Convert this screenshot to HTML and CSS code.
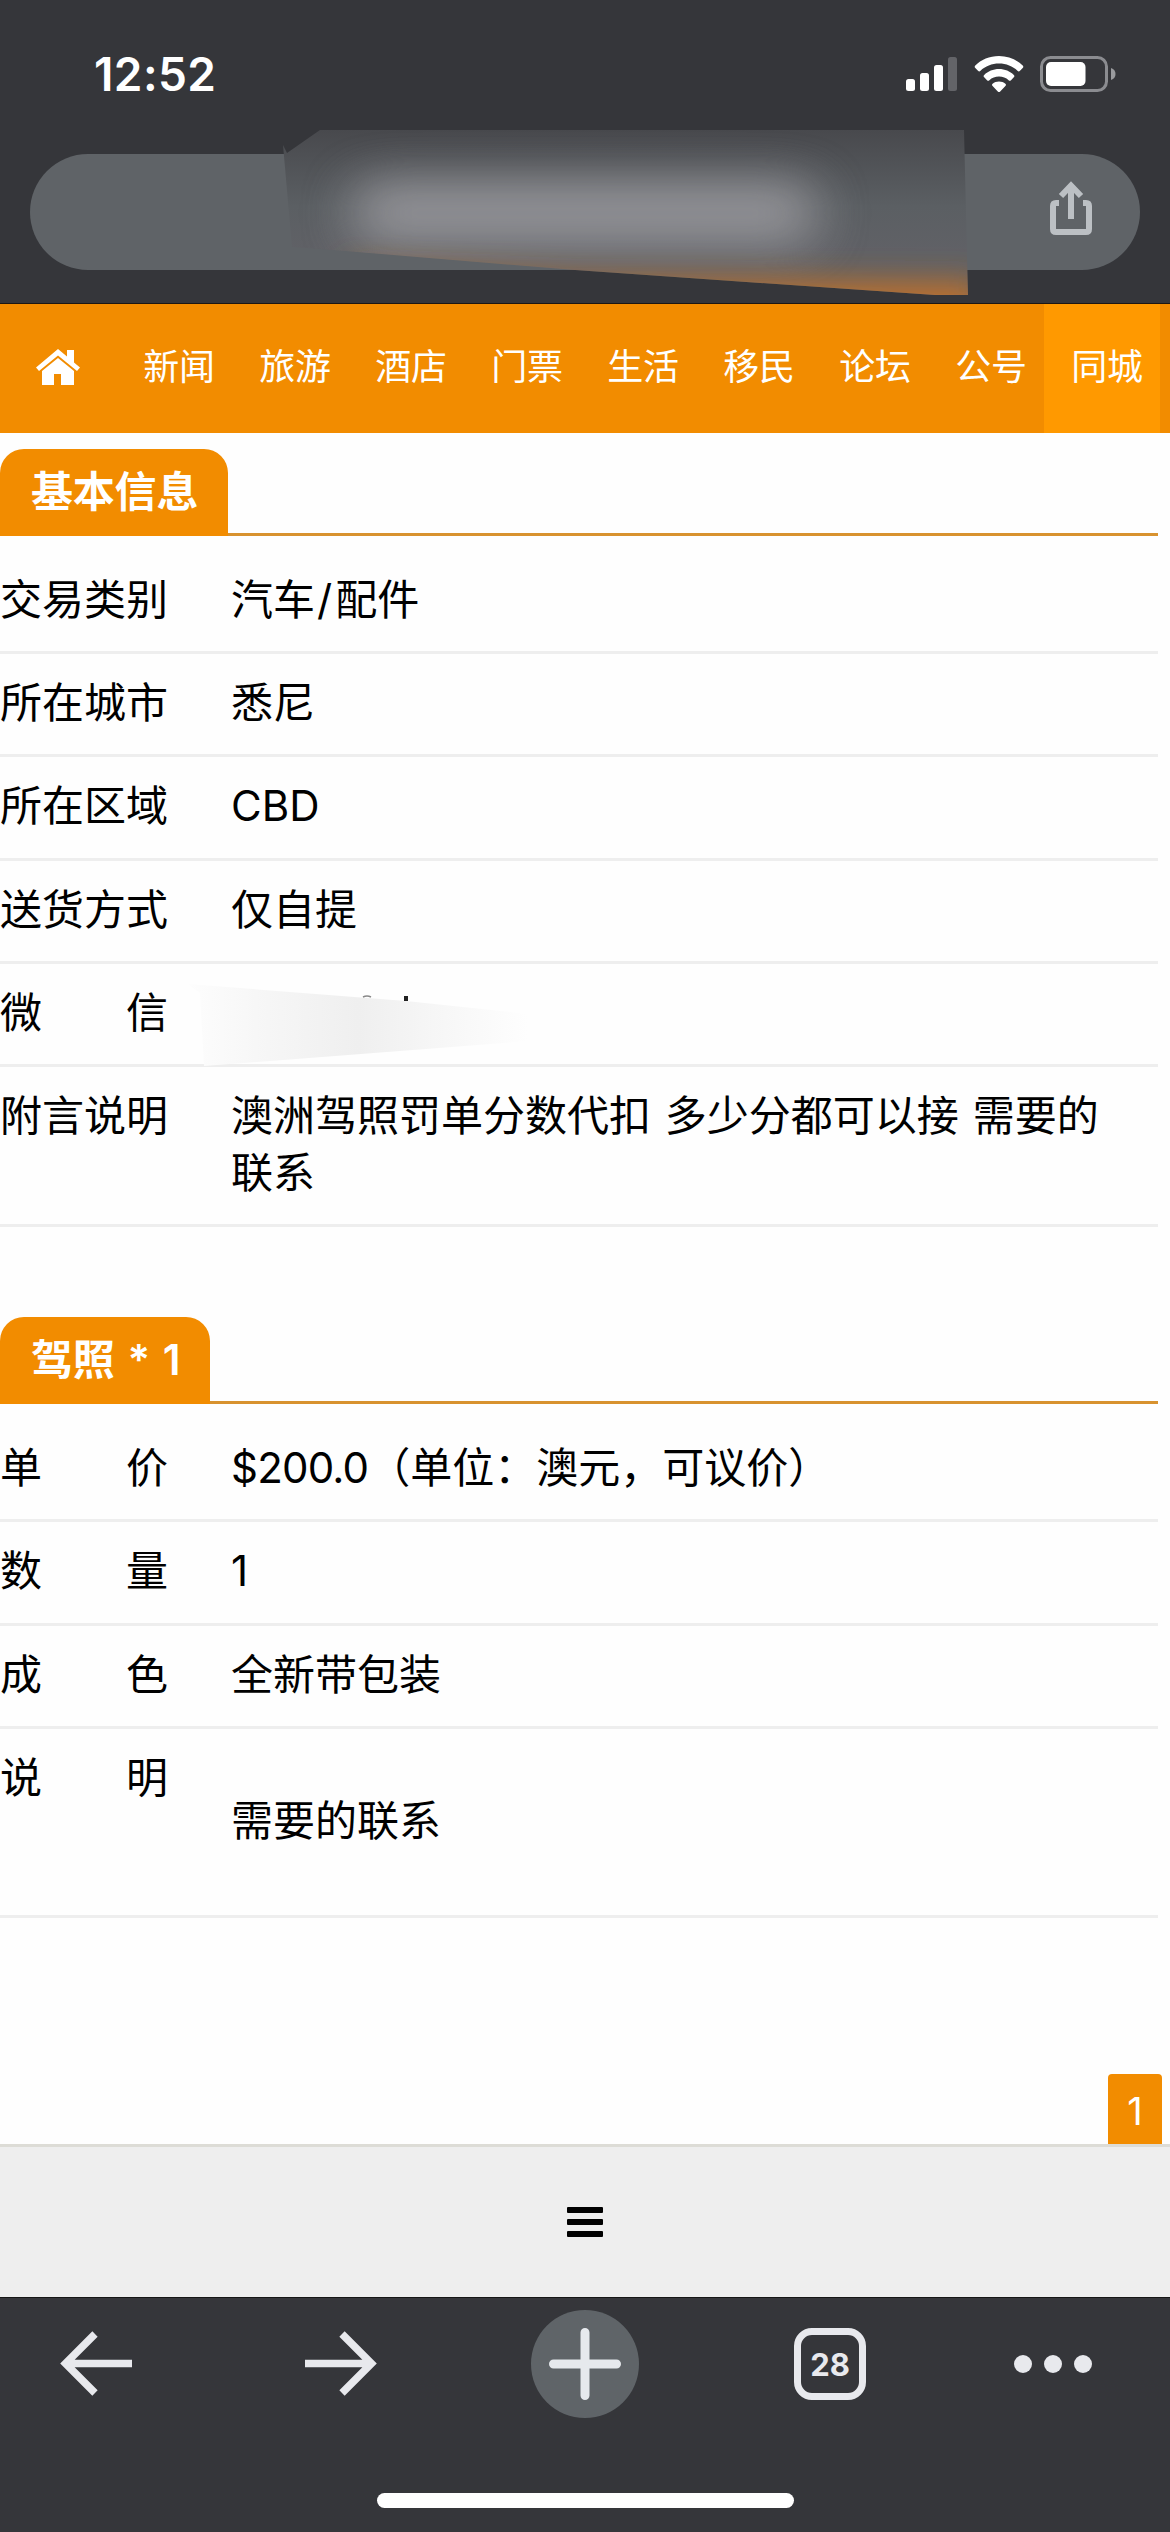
FILE: index.html
```html
<!DOCTYPE html>
<html lang="zh-CN">
<head>
    <meta charset="UTF-8">
    <meta name="viewport" content="width=device-width, initial-scale=1.0">
    <title>同城 - 基本信息</title>
    <link rel="stylesheet" href="styles.css">
</head>
<body>
    <header id="browser-top">
        <div class="status-bar">
            <span class="time">12:52</span>
            <div class="status-icons">
                <svg class="signal" viewBox="0 0 52 36" width="52" height="36">
                    <rect x="0" y="23" width="9" height="12" rx="2.5" fill="#fff"/>
                    <rect x="14" y="17" width="9" height="18" rx="2.5" fill="#fff"/>
                    <rect x="28" y="9" width="9" height="26" rx="2.5" fill="#fff"/>
                    <rect x="42" y="1" width="9" height="34" rx="2.5" fill="#636468"/>
                </svg>
                <svg class="wifi" viewBox="0 0 50 38" width="50" height="38">
                    <path d="M25 1C15.500 1 7 4.800 1.300 10.500c-.8.8-.8 1.700 0 2.500l2.700 2.800c.8.8 1.700.8 2.500 0C11.300 11.300 17.800 8.600 25 8.600s13.700 2.700 18.500 7.200c.8.8 1.700.8 2.500 0l2.700-2.800c.8-.8.8-1.700 0-2.500C43 4.800 34.500 1 25 1z" fill="#fff"/>
                    <path d="M25 14c-5.800 0-11 2.300-14.800 5.900-.8.8-.8 1.600 0 2.400l2.800 2.900c.8.800 1.600.8 2.400 0 2.500-2.300 5.900-3.600 9.600-3.600s7.100 1.300 9.600 3.600c.8.800 1.600.8 2.400 0l2.800-2.900c.8-.8.8-1.600 0-2.400C36 16.300 30.800 14 25 14z" fill="#fff"/>
                    <path d="M25 26.500c-2.500 0-4.700.9-6.400 2.300-.8.700-.7 1.500 0 2.300l5.200 5.300c.8.800 1.600.8 2.400 0l5.200-5.300c.7-.8.8-1.600 0-2.300-1.700-1.400-3.900-2.300-6.400-2.300z" fill="#fff"/>
                </svg>
                <svg class="battery" viewBox="0 0 76 36" width="76" height="36">
                    <rect x="1.500" y="1.500" width="65" height="33" rx="9" fill="none" stroke="#8b8c90" stroke-width="3"/>
                    <rect x="6" y="6" width="39.500" height="24" rx="5" fill="#fff"/>
                    <path d="M71 12c3 1 4.500 3.200 4.500 6S74 23 71 24z" fill="#9a9b9e"/>
                </svg>
            </div>
        </div>
        <div class="address-bar">
            <svg viewBox="0 0 42 54" width="42" height="54" fill="none" stroke="#bcc0c4" stroke-width="6">
                <path d="M9 22H6q-3 0-3 3v23q0 3 3 3h30q3 0 3-3V25q0-3-3-3h-3"/>
                <path d="M21 38V4M11 15L21 4.500 31 15"/>
            </svg>
        </div>
        <!-- endereço borrado -->
        <svg class="address-blur" viewBox="0 0 690 170" width="690" height="170">
            <defs>
                <clipPath id="smudge"><path d="M3 15L7 23 40 0H684L688 165H655L295 140 65 121 12 117z"/></clipPath>
                <linearGradient id="smudge-bg" x1="0" y1="0" x2="0" y2="1">
                    <stop offset="0" stop-color="#48494d"/>
                    <stop offset=".45" stop-color="#5b5f63"/>
                    <stop offset=".72" stop-color="#606166"/>
                    <stop offset="1" stop-color="#60605f"/>
                </linearGradient>
                <filter id="soft" x="-30%" y="-120%" width="160%" height="340%"><feGaussianBlur stdDeviation="26 22"/></filter>
                <filter id="glow" x="-30%" y="-80%" width="160%" height="260%"><feGaussianBlur stdDeviation="15"/></filter>
            </defs>
            <g clip-path="url(#smudge)">
                <rect width="690" height="170" fill="url(#smudge-bg)"/>
                <rect x="75" y="48" width="460" height="70" rx="20" fill="#929296" opacity=".95" filter="url(#soft)"/>
                <path d="M60 138L295 150 700 152V200H200z" fill="#bd712f" filter="url(#glow)"/>
            </g>
        </svg>
    </header>

    <nav id="nav">
        <a class="home">
            <svg viewBox="0 0 44 36" width="44" height="36" fill="#fff">
                <path d="M22 0L0 18.500l3 3.500L22 6.500 41 22l3-3.500-6-5V1h-7v6.500z"/>
                <path d="M22 9L6 22v14h12V25h7v11h13V22z"/>
            </svg>
        </a>
        <a>新闻</a>
        <a>旅游</a>
        <a>酒店</a>
        <a>门票</a>
        <a>生活</a>
        <a>移民</a>
        <a>论坛</a>
        <a>公号</a>
        <a class="active">同城</a>
    </nav>

    <main id="content">
        <section>
            <div class="section-title"><h2>基本信息</h2></div>
            <div class="row"><div class="label">交易类别</div><div class="value">汽车<span class="slash">/</span>配件</div></div>
            <div class="row"><div class="label">所在城市</div><div class="value">悉尼</div></div>
            <div class="row"><div class="label">所在区域</div><div class="value">CBD</div></div>
            <div class="row"><div class="label">送货方式</div><div class="value">仅自提</div></div>
            <div class="row wechat">
                <div class="label">微　　信</div>
                <div class="value"></div>
                <svg class="wechat-blur" viewBox="0 0 340 84" width="340" height="84">
                    <defs>
                        <linearGradient id="grey">
                            <stop offset="0" stop-color="#fdfdfd"/>
                            <stop offset=".2" stop-color="#f7f7f7"/>
                            <stop offset=".5" stop-color="#efefef"/>
                            <stop offset=".72" stop-color="#f6f6f6"/>
                            <stop offset="1" stop-color="#fefefe"/>
                        </linearGradient>
                    </defs>
                    <path d="M0 0L218 17 340 30V57L16 82 12 9z" fill="url(#grey)"/>
                    <path d="M175 13q4-2 8 0" stroke="#888" stroke-width="1.500" fill="none"/>
                    <path d="M216 12h4v5h-4z" fill="#222"/>
                </svg>
            </div>
            <div class="row"><div class="label">附言说明</div><div class="value">澳洲驾照罚单分数代扣 多少分都可以接 需要的联系</div></div>
        </section>

        <section>
            <div class="section-title"><h2>驾照 * 1</h2></div>
            <div class="row"><div class="label">单　　价</div><div class="value"><span class="price">$200.0</span>（单位：澳元，可议价）</div></div>
            <div class="row"><div class="label">数　　量</div><div class="value">1</div></div>
            <div class="row"><div class="label">成　　色</div><div class="value">全新带包装</div></div>
            <div class="row"><div class="label">说　　明</div><div class="value"><p>需要的联系</p></div></div>
        </section>

        <div class="page-number">1</div>
    </main>

    <div id="menu-bar">
        <svg viewBox="0 0 36 30" width="36" height="30">
            <rect y="0" width="36" height="6" rx="1"/>
            <rect y="12" width="36" height="6" rx="1"/>
            <rect y="24" width="36" height="6" rx="1"/>
        </svg>
    </div>

    <footer id="browser-bottom">
        <div class="toolbar">
            <svg viewBox="0 0 72 66" width="72" height="66" fill="none" stroke="#e8e9ed" stroke-width="7.500">
                <path d="M72 32.500H7M35 3L5.500 32.500 35 62"/>
            </svg>
            <svg viewBox="0 0 72 66" width="72" height="66" fill="none" stroke="#e8e9ed" stroke-width="7.500">
                <path d="M0 32.500H65M37 3L66.500 32.500 37 62"/>
            </svg>
            <div class="new-tab">
                <svg viewBox="0 0 72 72" width="72" height="72" stroke="#e6e9ed" stroke-width="9" stroke-linecap="round">
                    <path d="M4.500 36H67.500M36 4.500V67.500"/>
                </svg>
            </div>
            <div class="tabs">28</div>
            <svg viewBox="0 0 78 18" width="78" height="18" fill="#e8e9ed">
                <circle cx="9" cy="9" r="9"/>
                <circle cx="39" cy="9" r="9"/>
                <circle cx="69" cy="9" r="9"/>
            </svg>
        </div>
        <div class="home-indicator"></div>
    </footer>
</body>
</html>
```
FILE: styles.css
```css
* {
    box-sizing: border-box;
}
body {
    margin: 0;
    width: 1170px;
    height: 2532px;
    display: flex;
    flex-direction: column;
    overflow: hidden;
    background: #fefefe;
    color: #000;
    font-family: Inter, "Noto Sans CJK SC", sans-serif;
}
svg {
    display: block;
    flex-shrink: 0;
}
/* Topo do navegador */
#browser-top {
    position: relative;
    height: 304px;
    flex-shrink: 0;
    background: #35363a;
    border-bottom: 1px solid #1d1712;
}
.status-bar {
    height: 154px;
    padding: 0 54px 6px 94px;
    display: flex;
    align-items: center;
    justify-content: space-between;
}
.time {
    font-size: 46px;
    font-weight: 600;
    color: #fff;
    letter-spacing: 0.4px;
}
.status-icons {
    display: flex;
    align-items: center;
    gap: 16px;
}
.address-bar {
    height: 116px;
    margin: 0 30px;
    padding: 0 48px 8px 0;
    border-radius: 58px;
    background: #5f6367;
    display: flex;
    align-items: center;
    justify-content: flex-end;
}
.address-blur {
    position: absolute;
    left: 280px;
    top: 130px;
}
/* Menu do site */
#nav {
    height: 129px;
    flex-shrink: 0;
    display: flex;
    background: #f28c00;
}
#nav a {
    width: 116px;
    flex-shrink: 0;
    padding: 0 0 10px 10px;
    display: flex;
    align-items: center;
    justify-content: center;
    font-size: 36px;
    color: #fff;
    letter-spacing: -0.3px;
}
#nav a.home {
    padding: 0 0 4px;
}
#nav a.active {
    background: #ff9900;
}
/* Conteúdo */
#content {
    flex: 1;
    display: flex;
    flex-direction: column;
    padding-top: 16px;
    font-size: 42px;
    line-height: 57px;
}
section {
    width: 1158px;
    margin-bottom: 90px;
}
.section-title {
    height: 87px;
    display: flex;
    border-bottom: 3px solid #d8922f;
    margin-bottom: 15px;
}
h2 {
    margin: 0 0 -3px;
    height: 87px;
    padding: 0 30px 0 31px;
    border-radius: 24px 24px 0 0;
    background: #f28c00;
    color: #fff;
    font-size: 42px;
    font-weight: 600;
    line-height: 85px;
    letter-spacing: -0.2px;
    word-spacing: 2.5px;
}
.row {
    display: flex;
    padding: 20px 0 23.2px;
    border-bottom: 3px solid #eee;
}
.label {
    width: 231px;
    flex-shrink: 0;
}
.value {
    flex: 1;
    padding-right: 50px;
    word-spacing: 2px;
}
.value p {
    margin: 43px 0;
}
.price {
    letter-spacing: -0.8px;
}
.slash {
    margin: 0 3px 0 2px;
}
.wechat {
    position: relative;
}
.wechat-blur {
    position: absolute;
    left: 188px;
    top: 20px;
}
.page-number {
    width: 54px;
    height: 70px;
    margin: auto 8px 0 auto;
    border-radius: 4px 4px 0 0;
    background: #f28c00;
    color: #fff;
    font-size: 38px;
    line-height: 74px;
    text-align: center;
}
#menu-bar {
    height: 153px;
    flex-shrink: 0;
    display: flex;
    align-items: center;
    justify-content: center;
    background: #eee;
    border-top: 3px solid #dddcd6;
}
/* Barra inferior do navegador */
#browser-bottom {
    height: 235px;
    flex-shrink: 0;
    background: #35363a;
    border-top: 1px solid #161616;
}
.toolbar {
    height: 132px;
    padding: 0 76px 0 60px;
    display: grid;
    grid-template-columns: 245px 224px 265px 220px 78px;
    align-items: center;
}
.new-tab {
    width: 108px;
    height: 108px;
    border-radius: 50%;
    background: #5f6468;
    display: flex;
    align-items: center;
    justify-content: center;
    margin-left: 2px;
}
.tabs {
    width: 72px;
    height: 72px;
    border: 7.5px solid #e8e9ed;
    border-radius: 18px;
    color: #e8e9ed;
    font-size: 31px;
    font-weight: 700;
    line-height: 59px;
    text-align: center;
}
.home-indicator {
    width: 417px;
    height: 15px;
    margin: 63px auto 0;
    border-radius: 8px;
    background: #fff;
}
```
